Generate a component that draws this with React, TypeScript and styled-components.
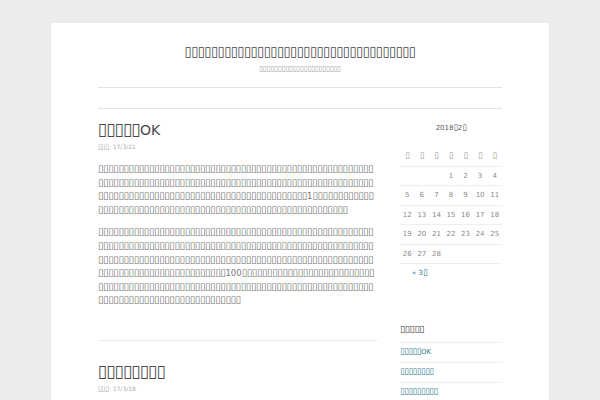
import React from 'react';
import styled, { createGlobalStyle } from 'styled-components';

// the reference renders its Japanese text as missing-glyph boxes
const box = (n: number) => '\u25AF'.repeat(n);

const GlobalStyle = createGlobalStyle`
  body {
    margin: 0;
    background: #ececec;
    font-family: "DejaVu Sans", sans-serif;
  }
`;

const Jp = styled.span`
  font-size: 1.2em;
  line-height: 0;
  letter-spacing: -0.05em;
`;

const Page = styled.div`
  display: flex;
  justify-content: center;
  padding-top: 23px;
`;

const Sheet = styled.div`
  width: 498px;
  min-height: 377px;
  box-sizing: border-box;
  padding: 0 47px;
  background: #fff;
`;

const Masthead = styled.header`
  text-align: center;
  padding: 22px 0 13px;
  border-bottom: 1px solid #e4e4e4;
`;

const SiteTitle = styled.h1`
  margin: 0;
  font-size: 11px;
  line-height: 16px;
  font-weight: normal;
  color: #444;
`;

const Tagline = styled.p`
  margin: 3px 0 0;
  font-size: 6.2px;
  line-height: 10px;
  color: #aaa;
`;

const NavBar = styled.nav`
  height: 20px;
  border-bottom: 1px solid #e4e4e4;
`;

const Columns = styled.div`
  display: flex;
  gap: 22px;
`;

const Main = styled.main`
  width: 280px;
`;

const Post = styled.article<{ $first?: boolean }>`
  padding: ${(p) => (p.$first ? '12px 0 32px' : '22px 0 0')};
  border-bottom: ${(p) => (p.$first ? '1px solid #eee' : 'none')};
`;

const PostTitle = styled.h2`
  margin: 0;
  font-size: 14px;
  line-height: 18px;
  font-weight: normal;
  color: #4a4a4a;
`;

const Meta = styled.div`
  margin-top: 3px;
  font-size: 6px;
  line-height: 9px;
  color: #aaa;
`;

const Para = styled.p`
  margin: 9px 0 0;
  font-size: 8.5px;
  line-height: 13.6px;
  color: #777;
  word-break: break-all;

  &:first-of-type {
    margin-top: 12px;
  }
`;

const Sidebar = styled.aside`
  width: 102px;
  padding-top: 14px;
`;

const Calendar = styled.table`
  width: 100%;
  border-collapse: collapse;
  font-size: 7px;
  color: #888;
`;

const Caption = styled.caption`
  padding-bottom: 14px;
  font-size: 7px;
  line-height: 10px;
  color: #555;
`;

const Cell = styled.td`
  height: 18.5px;
  padding: 0;
  text-align: center;
  border-bottom: 1px solid #eee;
`;

const HeadCell = styled(Cell).attrs({ as: 'th' })`
  font-weight: normal;
  color: #999;
`;

const CalNav = styled.div`
  padding: 4px 0 0 12px;
  font-size: 7px;
  line-height: 10px;
  color: #2a7b8c;
`;

const WidgetTitle = styled.h3`
  margin: 47px 0 0;
  font-size: 8px;
  line-height: 10px;
  font-weight: normal;
  color: #444;
`;

const RecentList = styled.ul`
  list-style: none;
  margin: 7px 0 0;
  padding: 0;
  border-top: 1px solid #eee;
`;

const RecentItem = styled.li`
  height: 19px;
  line-height: 19px;
  font-size: 7px;
  border-bottom: 1px solid #eee;
`;

const RecentLink = styled.a`
  color: #2a7b8c;
  text-decoration: none;
`;

const weekdays = 7;
const weeks: (number | null)[][] = [
  [null, null, null, 1, 2, 3, 4],
  [5, 6, 7, 8, 9, 10, 11],
  [12, 13, 14, 15, 16, 17, 18],
  [19, 20, 21, 22, 23, 24, 25],
  [26, 27, 28, null, null, null, null],
];

const recent = [
  <>
    <Jp>{box(5)}</Jp>OK
  </>,
  <Jp>{box(8)}</Jp>,
  <Jp>{box(9)}</Jp>,
];

export default function App() {
  return (
    <>
      <GlobalStyle />
      <Page>
        <Sheet>
          <Masthead>
            <SiteTitle>
              <Jp>{box(35)}</Jp>
            </SiteTitle>
            <Tagline>
              <Jp>{box(22)}</Jp>
            </Tagline>
          </Masthead>
          <NavBar />
          <Columns>
            <Main>
              <Post $first>
                <PostTitle>
                  <Jp>{box(5)}</Jp>OK
                </PostTitle>
                <Meta>
                  <Jp>{box(3)}</Jp>: 17/3/21
                </Meta>
                <Para>
                  <Jp>{box(149)}</Jp>1<Jp>{box(61)}</Jp>
                </Para>
                <Para>
                  <Jp>{box(187)}</Jp>100<Jp>{box(108)}</Jp>
                </Para>
              </Post>
              <Post>
                <PostTitle>
                  <Jp>{box(8)}</Jp>
                </PostTitle>
                <Meta>
                  <Jp>{box(3)}</Jp>: 17/3/18
                </Meta>
              </Post>
            </Main>
            <Sidebar>
              <Calendar>
                <Caption>
                  2018<Jp>{box(1)}</Jp>2<Jp>{box(1)}</Jp>
                </Caption>
                <thead>
                  <tr>
                    {Array.from({ length: weekdays }, (_, i) => (
                      <HeadCell key={i}>
                        <Jp>{box(1)}</Jp>
                      </HeadCell>
                    ))}
                  </tr>
                </thead>
                <tbody>
                  {weeks.map((week, w) => (
                    <tr key={w}>
                      {week.map((day, d) => (
                        <Cell key={d}>{day ?? ''}</Cell>
                      ))}
                    </tr>
                  ))}
                </tbody>
              </Calendar>
              <CalNav>
                « 3<Jp>{box(1)}</Jp>
              </CalNav>
              <WidgetTitle>
                <Jp>{box(5)}</Jp>
              </WidgetTitle>
              <RecentList>
                {recent.map((label, i) => (
                  <RecentItem key={i}>
                    <RecentLink href="#">{label}</RecentLink>
                  </RecentItem>
                ))}
              </RecentList>
            </Sidebar>
          </Columns>
        </Sheet>
      </Page>
    </>
  );
}
